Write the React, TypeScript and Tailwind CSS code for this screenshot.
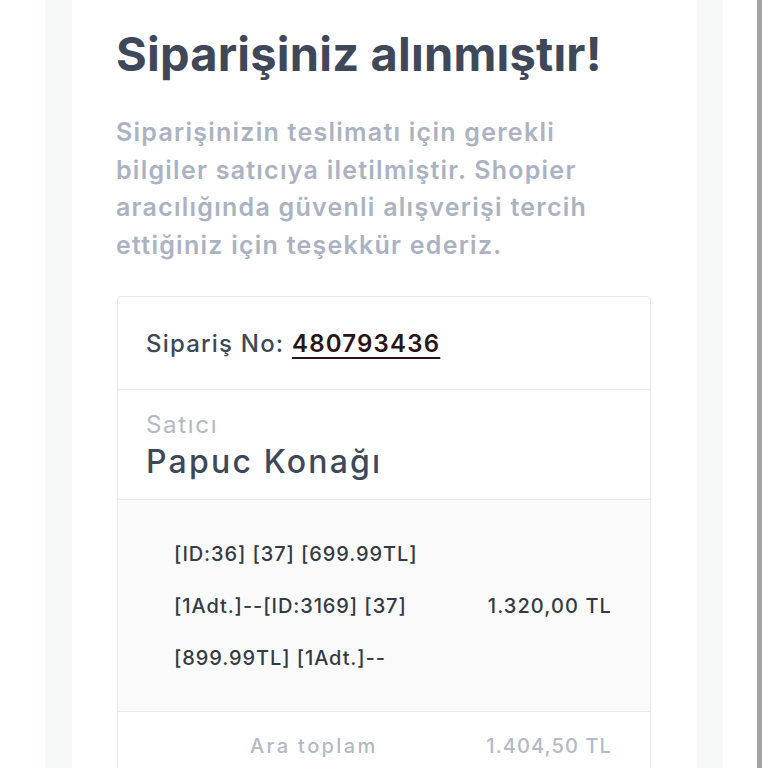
import React from 'react'

const font = { fontFamily: 'Inter, "Noto Sans", sans-serif' }

export default function App() {
  return (
    <div className="h-[768px] w-[768px] overflow-hidden bg-white flex" style={font}>
      <div className="ml-[45px] w-[678px] bg-[#f7f9f9] pl-[27px] pr-[26px]">
        <div className="bg-white pl-[44px] pr-[40px] pt-[26px] pb-10 min-h-[768px]">
          <h1 className="text-[47px] leading-[56px] font-bold text-[#3e4858] tracking-[0.2px]">
            Siparişiniz alınmıştır!
          </h1>
          <p className="mt-[32px] text-[25px] leading-[37.5px] font-semibold text-[#abb2c2] tracking-[1.25px] whitespace-nowrap">
            Siparişinizin teslimatı için gerekli
            <br />
            bilgiler satıcıya iletilmiştir. Shopier
            <br />
            aracılığında güvenli alışverişi tercih
            <br />
            ettiğiniz için teşekkür ederiz.
          </p>

          <div className="mt-[32px] ml-px mr-[6px] border border-[#e8e9eb] rounded-[5px] overflow-hidden">
            <div className="px-[28px] h-[93px] flex items-center border-b border-[#e8e9eb]">
              <span className="text-[24px] font-medium text-[#3e4858] tracking-[1.2px] pt-[2px]">
                Sipariş No:{' '}
                <a className="font-semibold text-[#2b1416] underline underline-offset-[5px] decoration-2">480793436</a>
              </span>
            </div>

            <div className="px-[28px] pt-[19px] pb-[16px] border-b border-[#e8e9eb]">
              <div className="text-[24px] leading-[32px] text-[#b3b9c5] tracking-[1.7px]">Satıcı</div>
              <div className="text-[32px] leading-[42px] font-medium text-[#3e4858] tracking-[2.2px]">Papuc Konağı</div>
            </div>

            <div className="bg-[#fafafb] pl-[56px] pr-[38px] pt-[28px] pb-[27px] flex items-center border-b border-[#e8e9eb]">
              <div className="w-[270px] text-[20px] leading-[52px] font-medium text-[#333a44] tracking-[0.9px] whitespace-nowrap">
                [ID:36] [37] [699.99TL]
                <br />
                [1Adt.]--[ID:3169] [37]
                <br />
                [899.99TL] [1Adt.]--
              </div>
              <div className="ml-auto text-[20px] font-medium text-[#333a44] tracking-[1.1px]">1.320,00 TL</div>
            </div>

            <div className="flex items-center h-[68px] text-[20px] font-medium text-[#b3b9c5]">
              <div className="ml-[132px] tracking-[2.4px]">Ara toplam</div>
              <div className="ml-auto mr-[38px] tracking-[1.1px]">1.404,50 TL</div>
            </div>
          </div>
        </div>
      </div>
      <div className="ml-[34px] w-[5px] h-full bg-[#a4a4a4]" />
    </div>
  )
}
